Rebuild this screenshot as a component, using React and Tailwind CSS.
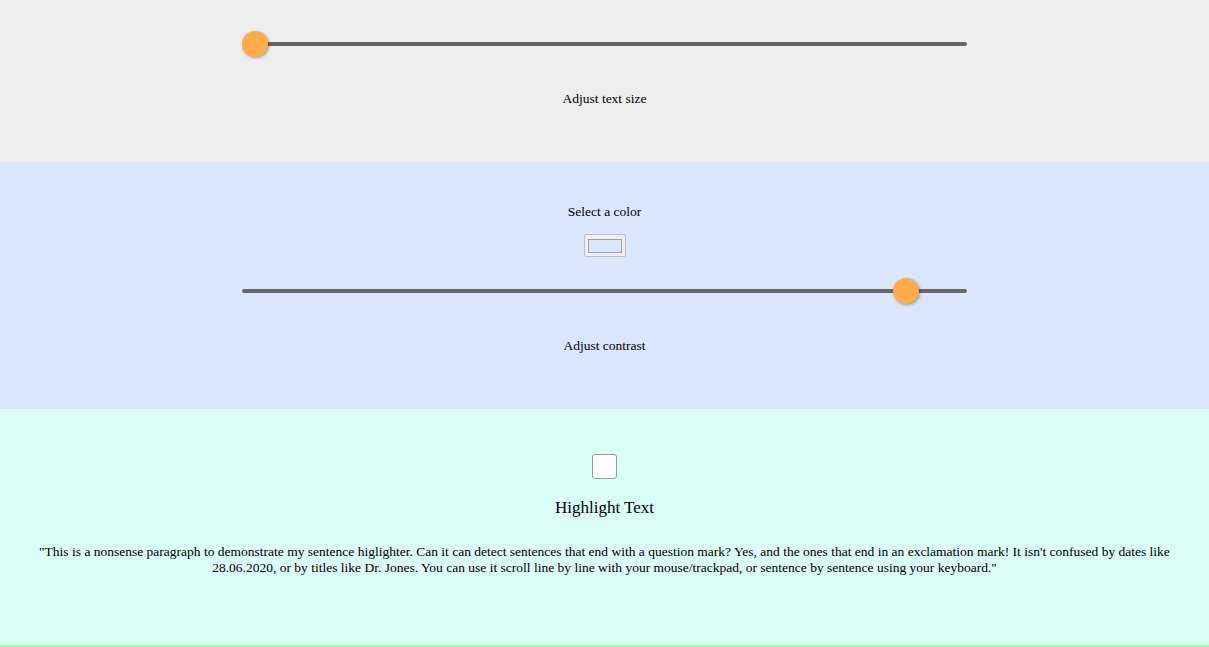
import React, { useState } from "react";

const Slider = ({ value, className = "" }) => (
  <div className={`relative w-[725px] h-[26px] flex items-center ${className}`}>
    <div className="w-full h-[4px] rounded-full bg-[#666666]" />
    <div
      className="absolute top-0 w-[26px] h-[26px] rounded-full bg-[#FFAD4A] shadow-[1px_1px_3px_rgba(0,0,0,0.35)]"
      style={{ left: `${value}px` }}
    />
  </div>
);

const App = () => {
  const [checked, setChecked] = useState(false);

  return (
    <div className="w-full flex flex-col text-black font-['Liberation_Serif',serif] text-[13.5px]">
      {/* Text size */}
      <section className="h-[162px] bg-[#EEEEEE] flex flex-col items-center pt-[31px]">
        <Slider value={0} />
        <p className="mt-[34px] leading-[15px]">Adjust text size</p>
      </section>

      {/* Colour + contrast */}
      <section className="h-[247px] bg-[#DBE6FF] flex flex-col items-center pt-[42px]">
        <p className="leading-[15px]">Select a color</p>
        <div className="mt-[15px] w-[42px] h-[23px] bg-[#EFEFEF] border border-[#BDBDBD] rounded-[2px] flex items-center justify-center">
          <div className="w-[34px] h-[14px] bg-[#DBE6FF] border border-[#9AA0A6]" />
        </div>
        <Slider value={651} className="mt-[21px]" />
        <p className="mt-[34px] leading-[15px]">Adjust contrast</p>
      </section>

      {/* Highlighter */}
      <section className="h-[238px] bg-[#DAFFF6] border-b-2 border-[#99FF99] flex flex-col items-center pt-[45px]">
        <button
          onClick={() => setChecked(!checked)}
          className="w-[25px] h-[25px] bg-white border border-[#999999] rounded-[3px]"
        />
        <h2 className="mt-[19px] text-[17px] leading-[20px]">Highlight Text</h2>
        <p className="mt-[26px] px-[20px] text-center leading-[16px]">
          "This is a nonsense paragraph to demonstrate my sentence higlighter. Can it can detect sentences that end with a question mark? Yes, and the ones that end in an exclamation mark! It isn't confused by dates like 28.06.2020, or by titles like Dr. Jones. You can use it scroll line by line with your mouse/trackpad, or sentence by sentence using your keyboard."
        </p>
      </section>
    </div>
  );
};

export default App;
